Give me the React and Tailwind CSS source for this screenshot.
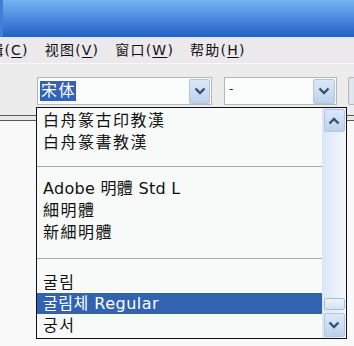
import React from 'react';

const CJK = { fontFamily: '"DejaVu Sans", "Noto Sans CJK SC", sans-serif' };
const CJK_TC = { fontFamily: '"DejaVu Sans", "Noto Sans CJK TC", sans-serif' };
const CJK_KR = { fontFamily: '"DejaVu Sans", "Noto Sans CJK KR", sans-serif' };

function Chevron({ up = false }) {
  return (
    <svg width="12" height="8" viewBox="0 0 12 8">
      <polyline
        points={up ? '1.5,6.5 6,2 10.5,6.5' : '1.5,1.5 6,6 10.5,1.5'}
        fill="none"
        stroke="#3d4f6e"
        strokeWidth="2.4"
      />
    </svg>
  );
}

function ArrowButton({ up, className = '' }) {
  return (
    <div
      className={`flex shrink-0 items-center justify-center rounded-[2px] border border-[#b4c6de] bg-gradient-to-b from-[#dde8f7] to-[#bcd2ee] ${className}`}
    >
      <Chevron up={up} />
    </div>
  );
}

const MENU = [
  { label: '编辑', key: 'C', clip: true },
  { label: '视图', key: 'V' },
  { label: '窗口', key: 'W' },
  { label: '帮助', key: 'H' },
];

// h = row height in px, measured from the screenshot
const FONTS = [
  { label: '白舟篆古印教漢', style: CJK_TC, h: 'h-[22px]', track: 'tracking-[1.5px]' },
  { label: '白舟篆書教漢', style: CJK_TC, h: 'h-[22px]', track: 'tracking-[1.5px]' },
  { sep: true, h: 'h-[24px]' },
  { label: 'Adobe 明體 Std L', style: CJK_TC, h: 'h-[22px]', track: 'tracking-[0.3px]' },
  { label: '細明體', style: CJK_TC, h: 'h-[22px]', track: 'tracking-[1.5px]' },
  { label: '新細明體', style: CJK_TC, h: 'h-[22px]', track: 'tracking-[1.5px]' },
  { sep: true, h: 'h-[28px]' },
  { label: '굴림', style: CJK_KR, h: 'h-[21px]', track: 'tracking-[1.5px]' },
  { label: '굴림체 Regular', style: CJK_KR, h: 'h-[21px]', track: 'tracking-[0.5px]', selected: true },
  { label: '궁서', style: CJK_KR, h: 'h-[23px]', track: 'tracking-[1.5px]' },
];

export default function App() {
  return (
    <div className="relative h-[346px] w-[354px] overflow-hidden bg-[#f9f9f9]" style={CJK}>
      {/* title bar */}
      <div className="h-[37px] border-l-[3px] border-[#3f7fd6] bg-gradient-to-b from-[#74b4f0] via-[#4a8ae0] to-[#2a5cc4]" />

      {/* menu bar */}
      <div className="flex h-[26px] items-center gap-[16px] overflow-hidden bg-[#ebe9ec] text-[14px] text-[#111]">
        {MENU.map((m) => (
          <span key={m.key} className={`shrink-0 tracking-[1.2px] ${m.clip ? 'ml-[-26px]' : ''}`}>
            {m.label}(<span className="underline underline-offset-2">{m.key}</span>)
          </span>
        ))}
      </div>

      {/* toolbar */}
      <div className="h-[52px] overflow-hidden border-t border-[#f7f7f7] bg-[#ececec] pt-[13px]">
        <div className="flex items-start">
          <div className="ml-[37px] flex h-[28px] w-[175px] shrink-0 items-center border border-[#b3b6ba] bg-[#fbfcfc] pl-[2px] pr-[1px]">
            <span className="flex h-[20px] items-center bg-[#3163b8] pl-[1px] text-[16px] leading-none tracking-[1.5px] text-white">
              宋体
            </span>
            <ArrowButton className="ml-auto h-[25px] w-[21px]" />
          </div>
          <div className="ml-[12px] flex h-[28px] w-[113px] shrink-0 items-center border border-[#b3b6ba] bg-[#fbfcfc] pl-[4px] pr-[1px]">
            <span className="mb-[4px] text-[12px] leading-none text-[#222]">-</span>
            <ArrowButton className="ml-auto h-[25px] w-[22px]" />
          </div>
          <div className="ml-[11px] h-[28px] w-[10px] shrink-0 rounded-[2px] border border-[#b3b6ba] bg-[#dfe6ee]" />
        </div>
      </div>

      {/* toolbar bottom edge */}
      <div className="h-[6px] border-y border-[#5a5a5a] bg-[#e8e8e8]" />

      {/* dropdown list */}
      <div className="absolute left-[36px] top-[107px] flex h-[232px] w-[311px] border border-[#111] bg-[#f7faf8]">
        <div className="flex flex-1 flex-col pt-[2px]">
          {FONTS.map((f, i) =>
            f.sep ? (
              <div key={i} className={`flex items-center ${f.h}`}>
                <div className="h-px w-full bg-[#a9a9a9]" />
              </div>
            ) : (
              <div
                key={i}
                className={`flex items-center whitespace-nowrap pl-[6px] text-[16px] leading-none ${f.h} ${f.track} ${
                  f.selected ? 'bg-[#3163b0] text-white' : 'text-[#111]'
                }`}
                style={f.style}
              >
                {f.label}
              </div>
            )
          )}
        </div>
        <div className="flex w-[24px] flex-col items-center bg-gradient-to-r from-[#dbe7f7] to-[#f3f7fc] px-[1px] py-[1px]">
          <ArrowButton up className="h-[23px] w-[21px]" />
          <div className="flex-1" />
          <div className="mb-[3px] h-[12px] w-[21px] rounded-[2px] border border-[#a8b9d2] bg-gradient-to-b from-[#eef3fa] to-[#d6e2f2]" />
          <ArrowButton className="h-[24px] w-[21px]" />
        </div>
      </div>
    </div>
  );
}
